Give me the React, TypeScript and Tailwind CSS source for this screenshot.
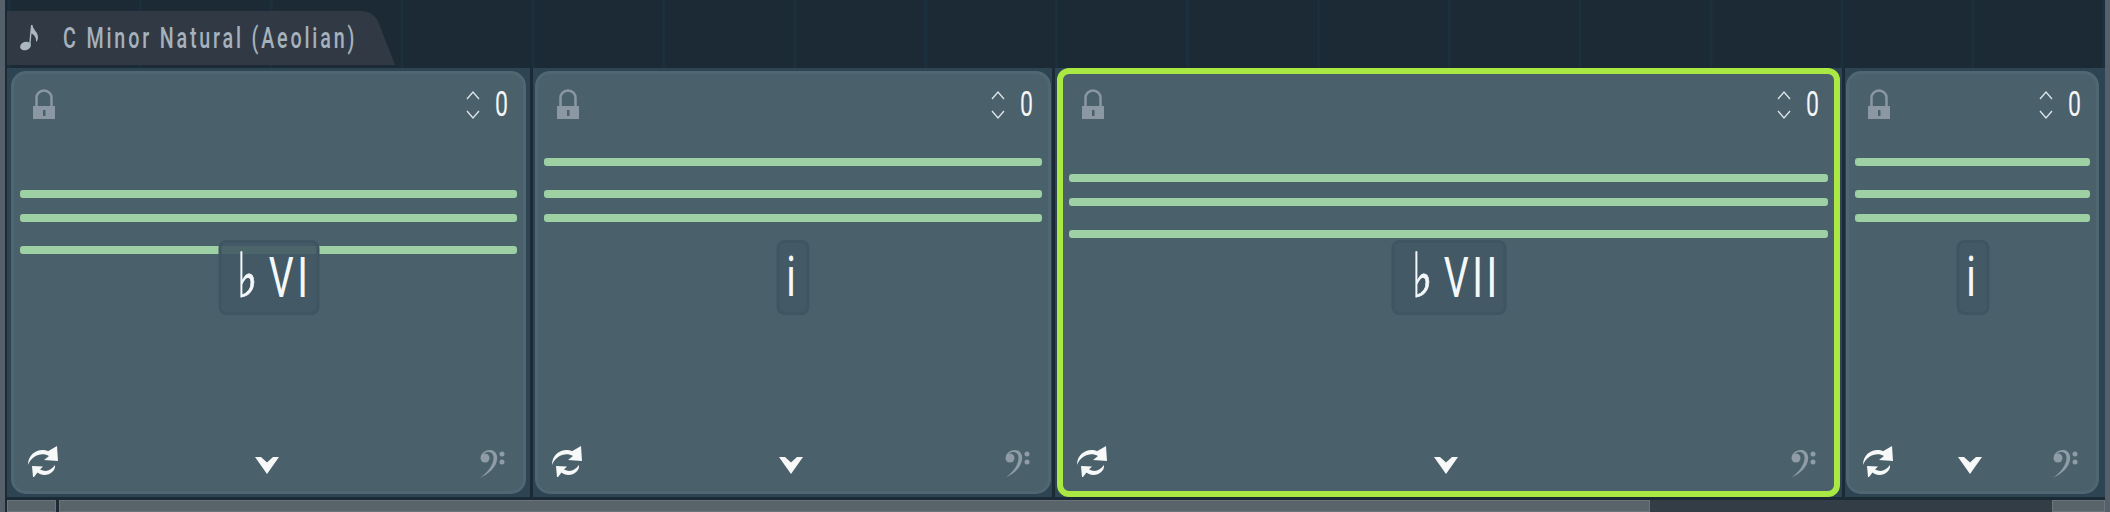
import React from "react";

// 調号タブとコードカードの列
interface ChordCardProps {
  label: string;
  flat?: boolean;
  labelClass?: string;
  boxWidth: string;
  widthClass: string;
  firstBar: string;
  secondBar: string;
  thirdBar: string;
  active?: boolean;
}

function LockIcon() {
  return (
    <svg width="22" height="30" viewBox="0 0 22 30" fill="none">
      <path d="M3.500 18V9a7.500 7.500 0 0 1 15 0v9" stroke="#8b98a3" strokeWidth="2.500" />
      <rect x="0" y="17" width="22" height="13" fill="#8b98a3" />
      <rect x="10" y="21" width="2.500" height="6" fill="#4a616c" />
    </svg>
  );
}

function UpDownIcon() {
  return (
    <svg width="14" height="28" viewBox="0 0 14 28" fill="none" stroke="#dfe6ea" strokeWidth="1.300">
      <path d="M1 8l6-7 6 7" />
      <path d="M1 20l6 7 6-7" />
    </svg>
  );
}

function CycleIcon() {
  return (
    <svg width="30" height="31" viewBox="0 0 30 31" fill="#f7f8f8">
      <path d="M0 19C0 8 9 3 16 4c2 .3 3 .7 4 1.200L29 0l1 15-14-1 5-4C14 6 4 9 0 19Z" />
      <path d="M27 19C28 26 19 31 12 28c-1-.5-2-1-2.500-1.500L6 31l-1 0-1-11 11 .5-3 3c6 3 11 1 15-4.500Z" />
    </svg>
  );
}

function ChevronIcon() {
  return (
    <svg width="24" height="17" viewBox="0 0 24 17" fill="#f8f8f8">
      <path d="M0 0h6l6 5.500 6-5.500h6L12 17Z" />
    </svg>
  );
}

function BassClefIcon() {
  return (
    <svg width="25" height="29" viewBox="0 0 25 29" fill="#8f9ca5">
      <circle cx="5" cy="9" r="4.500" />
      <path d="M1 8C1 1 15-3 17 7 18.500 17 9 25 0 29 7 24 14 16 13.500 8 13 2 5 1 1 8Z" />
      <circle cx="22" cy="5" r="2.500" />
      <circle cx="22" cy="13" r="2.500" />
    </svg>
  );
}

function NoteIcon() {
  return (
    <svg className="shrink-0" width="19" height="26" viewBox="0 0 19 26" fill="#aab6c1">
      <ellipse cx="5.500" cy="21" rx="5.500" ry="4.200" transform="rotate(-18 5.500 21)" />
      <path d="M9 20L11 0h1.500c.5 5 6 7 5.500 13-.2 2-1 3-2 4 .5-5-2-7-4.500-8.500L10.500 20Z" />
    </svg>
  );
}

function ChordCard({ label, flat, labelClass, boxWidth, widthClass, firstBar, secondBar, thirdBar, active }: ChordCardProps) {
  return (
    <div
      className={`${widthClass} shrink-0 flex flex-col bg-[#4a616c] ${
        active
          ? "border-[6px] border-[#aae843] rounded-[12px]"
          : "my-[3px] border-[3px] border-[#506672] rounded-[15px]"
      }`}
    >
      <div className="h-[45px] pt-[15px] pl-[19px] pr-[15px] flex justify-between">
        <LockIcon />
        <div className="flex items-start gap-[15px] pt-[2px]">
          <UpDownIcon />
          <span className="w-[13px] flex justify-center text-[35px] leading-[28px] text-[#f4f6f7] font-['Roboto',sans-serif] scale-x-[0.66]">
            0
          </span>
        </div>
      </div>

      <div className="relative flex-1 px-[6px]">
        <div className={`h-[8px] rounded-[3px] bg-[#9dd1a3] ${firstBar}`} />
        <div className={`h-[8px] rounded-[3px] bg-[#9dd1a3] ${secondBar}`} />
        <div className={`h-[8px] rounded-[3px] bg-[#9dd1a3] ${thirdBar}`} />
        <div
          className={`absolute top-[121px] left-1/2 -translate-x-1/2 ${boxWidth} h-[75px] flex items-center justify-center rounded-[8px] border-[3px] border-[#3f5561] bg-[#435965]/90`}
        >
          <span
            className={`whitespace-nowrap -mt-[2px] text-[56px] leading-[56px] tracking-[5px] text-[#f4f8fb] font-['Roboto',sans-serif] scale-x-[0.7] ${labelClass ?? ""}`}
          >
            {flat && <span className="[-webkit-text-stroke:0.8px_#f4f8fb] mr-[12px] text-[62px]">♭</span>}
            {label}
          </span>
        </div>
      </div>

      <div className="h-[45px] pl-[14px] pr-[18px] grid grid-cols-3 items-start">
        <div className="flex justify-start">
          <CycleIcon />
        </div>
        <div className="flex justify-center pt-[11px]">
          <ChevronIcon />
        </div>
        <div className="flex justify-end pt-[3px]">
          <BassClefIcon />
        </div>
      </div>
    </div>
  );
}

export default function App() {
  return (
    <div className="w-[2110px] h-[512px] flex overflow-hidden bg-[#55606a]">
      <div className="w-[5px] shrink-0" />

      <div className="flex-1 flex flex-col border-l-2 border-[#1b2a35] bg-[#1b2a35]">
        {/* タブ帯 */}
        <div className="h-[68px] pt-[11px] shrink-0 bg-[linear-gradient(90deg,#1b2f3c_3px,transparent_3px)] bg-[size:130.9px_100%] bg-[position:1px_0]">
          <div className="w-[388px] h-[54px] bg-[#313a44] [clip-path:path('M0_0H355Q365_0_371_10L388_54H0Z')] flex items-center pl-[13px]">
            <NoteIcon />
            <span className="ml-[24px] whitespace-nowrap origin-left text-[29px] leading-[30px] tracking-[4.15px] text-[#a5b1bd] font-medium font-['Roboto',sans-serif] scale-x-[0.68]">
              C Minor Natural (Aeolian)
            </span>
          </div>
        </div>

        {/* コードカード */}
        <div className="h-[429px] shrink-0 flex bg-[#2d4452]">
          <div className="w-[4px] shrink-0" />
          <ChordCard
            label="VI"
            flat
            labelClass="translate-x-[5px]"
            boxWidth="w-[101px]"
            widthClass="w-[515px]"
            firstBar="mt-[71px]"
            secondBar="mt-[16px]"
            thirdBar="mt-[24px]"
          />
          <div className="ml-[4px] mr-[2px] w-[3px] shrink-0 bg-[#1b2a35]" />
          <ChordCard
            label="i"
            boxWidth="w-[33px]"
            widthClass="w-[516px]"
            firstBar="mt-[39px]"
            secondBar="mt-[24px]"
            thirdBar="mt-[16px]"
          />
          <div className="ml-[1px] mr-[2px] w-[3px] shrink-0 bg-[#1b2a35]" />
          <ChordCard
            label="VII"
            flat
            labelClass="translate-x-[8px]"
            boxWidth="w-[115px]"
            widthClass="w-[783px]"
            firstBar="mt-[55px]"
            secondBar="mt-[16px]"
            thirdBar="mt-[24px]"
            active
          />
          <div className="ml-[2px] mr-[1px] w-[3px] shrink-0 bg-[#1b2a35]" />
          <ChordCard
            label="i"
            boxWidth="w-[33px]"
            widthClass="w-[253px]"
            firstBar="mt-[39px]"
            secondBar="mt-[24px]"
            thirdBar="mt-[16px]"
          />
        </div>

        {/* スクロールバー */}
        <div className="mt-[3px] flex-1 flex bg-[#323d45]">
          <div className="w-[49px] shrink-0 bg-[#59636a] border border-[#6a747a]" />
          <div className="w-[3px] shrink-0 bg-[#1b2a35]" />
          <div className="w-[1591px] shrink-0 bg-[#59636a] border border-[#6a747a]" />
          <div className="flex-1" />
          <div className="w-[53px] shrink-0 bg-[#59636a] border border-[#6a747a]" />
        </div>
      </div>

      <div className="w-[5px] shrink-0" />
    </div>
  );
}
